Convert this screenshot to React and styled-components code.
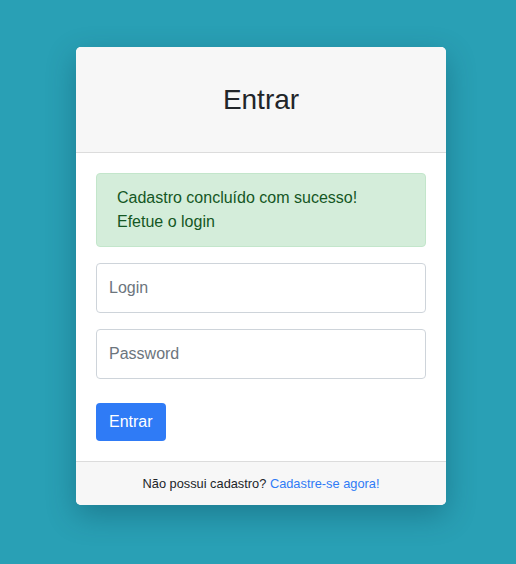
import React from "react";
import styled, { createGlobalStyle } from "styled-components";

const GlobalStyle = createGlobalStyle`
  html, body {
    margin: 0;
    padding: 0;
    background: #29a0b5;
    font-family: 'Liberation Sans', Arial, sans-serif;
  }
  * { box-sizing: border-box; }
`;

const Page = styled.div`
  min-height: 564px;
  display: flex;
  justify-content: center;
  align-items: flex-start;
  padding: 47px 0 0 6px;
`;

const Card = styled.div`
  width: 370px;
  background: #ffffff;
  border-radius: 5px;
  box-shadow: 0 10px 30px rgba(0, 40, 60, 0.3);
  overflow: hidden;
`;

const Header = styled.div`
  background: #f7f7f7;
  border-bottom: 1px solid #dcdcdc;
  padding: 32px 20px 31px;
  text-align: center;
`;

const Title = styled.h1`
  margin: 0;
  font-size: 28px;
  line-height: 42px;
  font-weight: 400;
  color: #212529;
`;

const Body = styled.form`
  padding: 20px 20px 20px;
  display: flex;
  flex-direction: column;
  align-items: flex-start;
`;

const Alert = styled.div`
  width: 100%;
  background: #d4edda;
  border: 1px solid #c3e6cb;
  border-radius: 4px;
  color: #155724;
  font-size: 16px;
  line-height: 24px;
  padding: 12px 20px;
  margin-bottom: 16px;
`;

const Input = styled.input`
  width: 100%;
  height: 50px;
  border: 1px solid #ced4da;
  border-radius: 4px;
  padding: 12px 12px;
  font-size: 16px;
  font-family: inherit;
  color: #495057;
  margin-bottom: ${(p) => p.$mb || 16}px;
  &::placeholder { color: #6c757d; }
`;

const Button = styled.button`
  background: #2f7bf6;
  color: #ffffff;
  border: none;
  border-radius: 4px;
  font-family: inherit;
  font-size: 16px;
  line-height: 24px;
  padding: 7px 13px;
  height: 38px;
`;

const Footer = styled.div`
  background: #f7f7f7;
  border-top: 1px solid #dcdcdc;
  padding: 12px 20px;
  text-align: center;
  font-size: 12.8px;
  line-height: 19px;
  color: #212529;
`;

const Link = styled.a`
  color: #2f7bf6;
  text-decoration: none;
`;

export default function App() {
  return (
    <>
      <GlobalStyle />
      <Page>
        <Card>
          <Header>
            <Title>Entrar</Title>
          </Header>
          <Body onSubmit={(e) => e.preventDefault()}>
            <Alert>
              Cadastro concluído com sucesso!
              <br />
              Efetue o login
            </Alert>
            <Input placeholder="Login" />
            <Input type="password" placeholder="Password" $mb={24} />
            <Button type="submit">Entrar</Button>
          </Body>
          <Footer>
            Não possui cadastro? <Link href="#">Cadastre-se agora!</Link>
          </Footer>
        </Card>
      </Page>
    </>
  );
}
